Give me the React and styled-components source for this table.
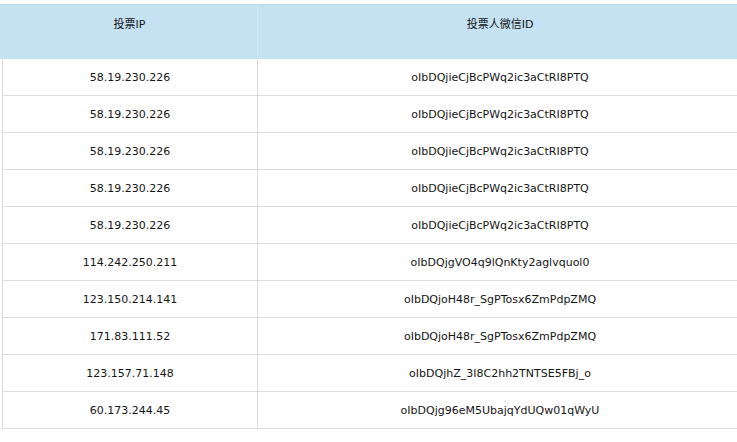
import styled, { createGlobalStyle } from 'styled-components';

const GlobalStyle = createGlobalStyle`
  html, body {
    margin: 0;
    padding: 0;
    background: #fff;
    overflow: hidden;
  }
  body {
    font-family: "DejaVu Sans", "Noto Sans CJK SC", sans-serif;
    font-size: 11px;
    color: #151515;
  }
`;

const Wrapper = styled.div`
  width: 742px;
  padding-top: 4px;
`;

const HeadRow = styled.div`
  display: grid;
  grid-template-columns: 257px 1fr;
  height: 55px;
  background: #c5e2f3;
  border-top: 1px solid #bcd8ea;
  box-sizing: border-box;
`;

const HeadCell = styled.div`
  text-align: center;
  padding-top: 13px;
  line-height: 14px;
  font-size: 11px;
  padding-left: ${p => p.$shift || 0}px;
  border-left: ${p => (p.$divider ? '1px solid #cfe8f6' : 'none')};
`;

const Body = styled.div`
  margin-left: 2px;
  border-left: 1px solid #dcdcdc;
`;

const Row = styled.div`
  display: grid;
  grid-template-columns: 254px 1fr;
  height: 37px;
  border-bottom: 1px solid #dcdcdc;
  box-sizing: border-box;
`;

const Cell = styled.div`
  display: flex;
  align-items: center;
  justify-content: center;
  border-left: ${p => (p.$divider ? '1px solid #dcdcdc' : 'none')};
`;

const rows = [
  ['58.19.230.226', 'oIbDQjieCjBcPWq2ic3aCtRI8PTQ'],
  ['58.19.230.226', 'oIbDQjieCjBcPWq2ic3aCtRI8PTQ'],
  ['58.19.230.226', 'oIbDQjieCjBcPWq2ic3aCtRI8PTQ'],
  ['58.19.230.226', 'oIbDQjieCjBcPWq2ic3aCtRI8PTQ'],
  ['58.19.230.226', 'oIbDQjieCjBcPWq2ic3aCtRI8PTQ'],
  ['114.242.250.211', 'oIbDQjgVO4q9lQnKty2aglvquol0'],
  ['123.150.214.141', 'oIbDQjoH48r_SgPTosx6ZmPdpZMQ'],
  ['171.83.111.52', 'oIbDQjoH48r_SgPTosx6ZmPdpZMQ'],
  ['123.157.71.148', 'oIbDQjhZ_3I8C2hh2TNTSE5FBj_o'],
  ['60.173.244.45', 'oIbDQjg96eM5UbajqYdUQw01qWyU'],
];

export default function App() {
  return (
    <>
      <GlobalStyle />
      <Wrapper>
        <HeadRow>
          <HeadCell $shift={2}>投票IP</HeadCell>
          <HeadCell $divider>投票人微信ID</HeadCell>
        </HeadRow>
        <Body>
          {rows.map((r, i) => (
            <Row key={i}>
              <Cell>{r[0]}</Cell>
              <Cell $divider>{r[1]}</Cell>
            </Row>
          ))}
        </Body>
      </Wrapper>
    </>
  );
}
